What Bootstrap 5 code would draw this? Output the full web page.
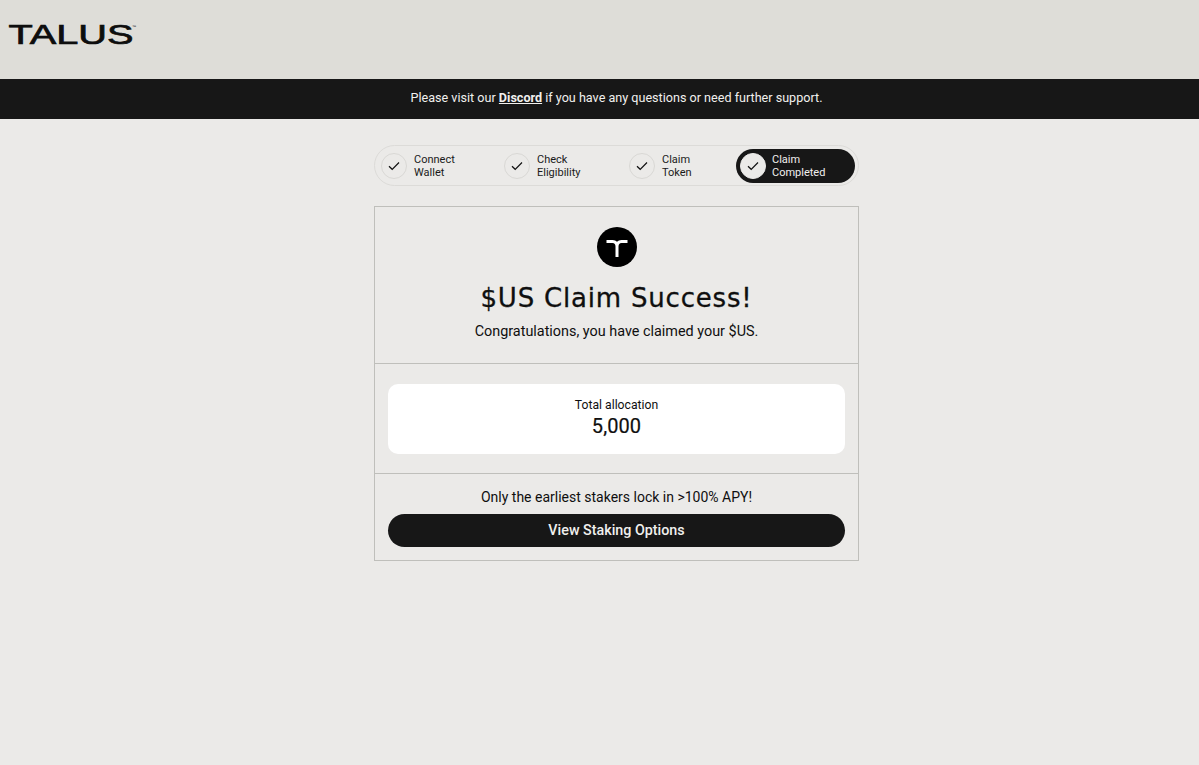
<!DOCTYPE html>
<html lang="en">
<head>
<meta charset="utf-8">
<title>Talus claim</title>
<link href="https://cdn.jsdelivr.net/npm/bootstrap@5.3.0/dist/css/bootstrap.min.css" rel="stylesheet">
<style>
body{background:#ebeae8;font-family:Roboto,"Liberation Sans",sans-serif;color:#0f0f0f;min-height:765px}
.top-head{height:79px;background:#deddd8;padding:21px 0 0 8px}
.logo-svg{display:block;width:136px;height:28px;overflow:visible}
.logo-word{font-family:"Liberation Sans",sans-serif;font-size:28px;fill:#0d0d0d;stroke:#0d0d0d;stroke-width:.7}
.logo-tm{font-family:"Liberation Sans",sans-serif;font-size:4px;fill:#0d0d0d}
.notice-bar{height:40px;background:#171717;color:#f1f0ee;font-size:12.6px;line-height:37px;padding-left:34px}
.notice-bar a{color:#f1f0ee;font-weight:700}
.claim-col{width:485px;margin-left:374px;padding-top:26px}
.stepper{height:41px;border:1px solid #dcdbd8;border-radius:21px;padding:3px 3px 3px 6px}
.step-item{height:34px;font-size:11px;line-height:13.5px;color:#1a1a1a}
.step-label{padding-top:1px}
.step-circle{width:26px;height:26px;border:1px solid #d9d8d5;border-radius:50%;flex:none}
.step-gap{gap:7px}
.step-a{width:123px}
.step-b{width:125px}
.step-c{width:107px}
.step-done{width:119px;background:#171717;color:#f1f0ee;border-radius:17px;padding-left:4px}
.step-done .step-circle{background:#ebeae8;border-color:#ebeae8}
.step-done.step-gap{gap:6px}
.claim-box{margin-top:20px;border:1px solid #bfbfbb}
.box-top{height:156px;padding-top:20px}
.box-mid{height:110px;padding:20px 13px 0;border-top:1px solid #bfbfbb}
.box-end{height:87px;padding:14px 13px 0;border-top:1px solid #bfbfbb}
.t-badge{width:40px;height:40px;background:#000;border-radius:50%}
.claim-title{font-family:"DejaVu Sans",sans-serif;font-size:26px;line-height:30px;font-weight:400;margin:16px 0 0;letter-spacing:.8px;-webkit-text-stroke:.3px #0f0f0f}
.claim-sub{font-size:14.4px;line-height:20px;margin:9px 0 0}
.alloc-card{height:70px;background:#fff;border-radius:10px;padding-top:13px}
.alloc-label{font-size:12.2px;line-height:16px}
.alloc-num{font-size:20px;line-height:26px;font-weight:400;letter-spacing:.1px;-webkit-text-stroke:.2px #0f0f0f}
.stake-note{font-size:14px;line-height:18px}
.stake-btn{height:33px;margin-top:8px;background:#171717;color:#f1f0ee;border:0;border-radius:17px;font-size:14.3px;font-weight:500;padding:0}
.stake-btn:hover{background:#171717;color:#f1f0ee}
</style>
</head>
<body>
<header class="top-head">
<svg class="logo-svg" viewBox="0 0 136 28" role="img" aria-label="TALUS"><text class="logo-word" x="0.5" y="23" textLength="125" lengthAdjust="spacingAndGlyphs">TALUS</text><text class="logo-tm" x="124" y="7">™</text></svg>
</header>
<div class="notice-bar text-center">Please visit our <a href="#">Discord</a> if you have any questions or need further support.</div>
<main class="claim-col">
<div class="stepper d-flex align-items-center">
<div class="step-item step-a step-gap d-flex align-items-center"><span class="step-circle d-flex align-items-center justify-content-center"><svg width="12" height="10" viewBox="0 0 12 10" fill="none" stroke="#111" stroke-width="1.2"><path d="M1 5.2 4.2 8.3 11 1.5"/></svg></span><span class="step-label">Connect<br>Wallet</span></div>
<div class="step-item step-b step-gap d-flex align-items-center"><span class="step-circle d-flex align-items-center justify-content-center"><svg width="12" height="10" viewBox="0 0 12 10" fill="none" stroke="#111" stroke-width="1.2"><path d="M1 5.2 4.2 8.3 11 1.5"/></svg></span><span class="step-label">Check<br>Eligibility</span></div>
<div class="step-item step-c step-gap d-flex align-items-center"><span class="step-circle d-flex align-items-center justify-content-center"><svg width="12" height="10" viewBox="0 0 12 10" fill="none" stroke="#111" stroke-width="1.2"><path d="M1 5.2 4.2 8.3 11 1.5"/></svg></span><span class="step-label">Claim<br>Token</span></div>
<div class="step-item step-done step-gap d-flex align-items-center"><span class="step-circle d-flex align-items-center justify-content-center"><svg width="12" height="10" viewBox="0 0 12 10" fill="none" stroke="#111" stroke-width="1.2"><path d="M1 5.2 4.2 8.3 11 1.5"/></svg></span><span class="step-label">Claim<br>Completed</span></div>
</div>
<section class="claim-box">
<div class="box-top text-center">
<div class="t-badge d-flex align-items-center justify-content-center mx-auto"><svg width="22" height="22" viewBox="0 0 22 22" fill="none" stroke="#fff" stroke-width="3"><path d="M.5 5.5H6.5C9.5 5.5 11 7.5 11 10.5V21M21.5 5.5H15.5C12.5 5.5 11 7.5 11 10.5"/></svg></div>
<h1 class="claim-title">$US Claim Success!</h1>
<p class="claim-sub">Congratulations, you have claimed your $US.</p>
</div>
<div class="box-mid">
<div class="alloc-card text-center">
<div class="alloc-label">Total allocation</div>
<div class="alloc-num">5,000</div>
</div>
</div>
<div class="box-end text-center">
<div class="stake-note">Only the earliest stakers lock in &gt;100% APY!</div>
<button type="button" class="btn stake-btn w-100">View Staking Options</button>
</div>
</section>
</main>
</body>
</html>
